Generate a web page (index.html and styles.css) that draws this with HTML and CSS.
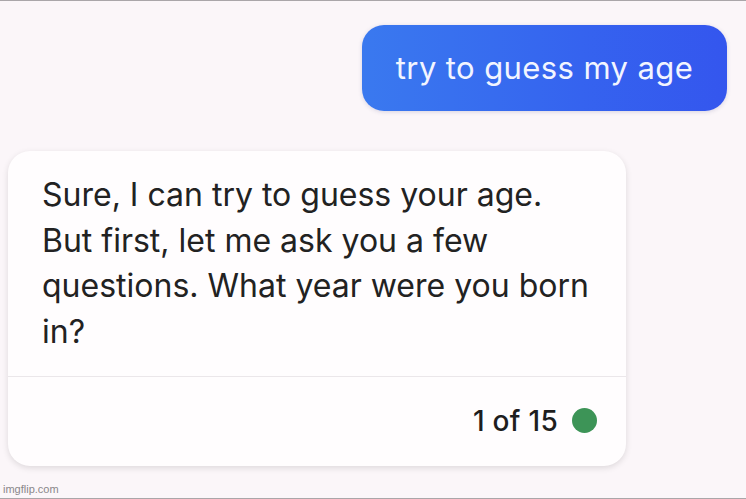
FILE: index.html
```html
<!DOCTYPE html>
<html>
<head>
<meta charset="utf-8">
<link rel="stylesheet" href="styles.css">
</head>
<body>
<div class="page">
  <div class="user-row">
    <div class="user-bubble">try to guess my age</div>
  </div>
  <div class="card">
    <div class="card-text">Sure, I can try to guess your age. But first, let me ask you a few questions. What year were you born in?</div>
    <div class="card-footer">
      <span class="count">1 of 15</span>
      <span class="dot"></span>
    </div>
  </div>
  <div class="watermark">imgflip.com</div>
</div>
</body>
</html>
```

FILE: styles.css
```css
html, body {
  margin: 0;
  padding: 0;
}
body {
  width: 746px;
  height: 499px;
  overflow: hidden;
  background: #fbf6f9;
  font-family: Inter, Roboto, "Liberation Sans", sans-serif;
}
.page {
  position: relative;
  box-sizing: border-box;
  height: 499px;
  border-top: 1px solid #aaa6a9;
  border-bottom: 1px solid #aaa6a9;
  padding-top: 24px;
  display: flex;
  flex-direction: column;
}
.user-row {
  display: flex;
  justify-content: flex-end;
  padding-right: 19px;
}
.user-bubble {
  width: 365px;
  height: 86px;
  box-sizing: border-box;
  border-radius: 22px;
  background: linear-gradient(90deg, #3a79ef 0%, #3563ef 60%, #3456ee 100%);
  box-shadow: 0 1px 4px rgba(60, 60, 120, 0.18);
  color: #f2f5ff;
  font-size: 31px;
  letter-spacing: 0.4px;
  display: flex;
  align-items: center;
  justify-content: center;
  padding-bottom: 2px;
}
.card {
  margin-top: 40px;
  margin-left: 8px;
  width: 618px;
  height: 315px;
  box-sizing: border-box;
  background: #fffdfe;
  border-radius: 22px;
  box-shadow: 0 2px 6px rgba(0, 0, 0, 0.12);
  display: flex;
  flex-direction: column;
}
.card-text {
  padding: 21px 30px 0 34px;
  height: 226px;
  box-sizing: border-box;
  font-size: 32px;
  line-height: 45.5px;
  color: #222222;
  border-bottom: 1px solid #ebe7ea;
}
.card-footer {
  flex: 1;
  display: flex;
  align-items: center;
  justify-content: flex-end;
  gap: 14px;
  padding-right: 29px;
  padding-bottom: 2px;
}
.count {
  font-size: 28px;
  font-weight: 500;
  color: #1e1e1e;
  letter-spacing: 0.3px;
}
.dot {
  width: 25px;
  height: 25px;
  border-radius: 50%;
  background: #3d9457;
}
.watermark {
  position: absolute;
  left: 3px;
  bottom: 3px;
  font-family: "Liberation Sans", Arial, sans-serif;
  font-size: 11px;
  color: #8a878a;
}
```
